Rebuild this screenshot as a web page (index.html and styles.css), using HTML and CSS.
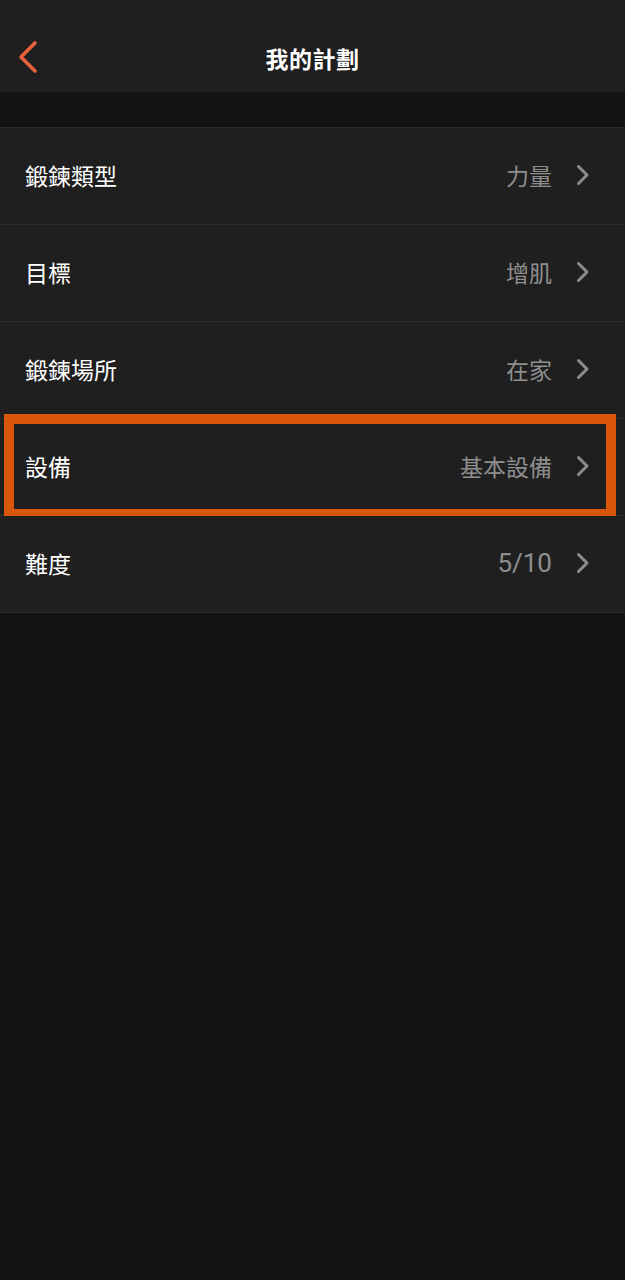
FILE: index.html
```html
<!DOCTYPE html>
<html lang="zh-Hant">
  <head>
    <meta charset="UTF-8" />
    <meta name="viewport" content="width=device-width, initial-scale=1.0" />
    <title>我的計劃</title>
    <link rel="stylesheet" href="styles.css">
  </head>
  <body>
    <header class="topbar">
      <button class="back" aria-label="返回">
        <svg width="22" height="34" viewBox="0 0 22 34">
          <path d="M18 3 L4 17 L18 31" fill="none" stroke="#e8603c" stroke-width="3.6" stroke-linecap="round" stroke-linejoin="round" />
        </svg>
      </button>
      <h1 class="title">我的計劃</h1>
    </header>

    <div class="spacer"></div>

    <ul class="settings">
      <li class="row">
        <span class="label">鍛鍊類型</span>
        <span class="value">力量</span>
        <svg class="chev" width="14" height="22" viewBox="0 0 14 22">
          <path d="M2.5 2.5 L11 11 L2.5 19.5" fill="none" stroke="#8c8c8c" stroke-width="3" stroke-linecap="round" stroke-linejoin="round" />
        </svg>
      </li>
      <li class="row">
        <span class="label">目標</span>
        <span class="value">增肌</span>
        <svg class="chev" width="14" height="22" viewBox="0 0 14 22">
          <path d="M2.5 2.5 L11 11 L2.5 19.5" fill="none" stroke="#8c8c8c" stroke-width="3" stroke-linecap="round" stroke-linejoin="round" />
        </svg>
      </li>
      <li class="row">
        <span class="label">鍛鍊場所</span>
        <span class="value">在家</span>
        <svg class="chev" width="14" height="22" viewBox="0 0 14 22">
          <path d="M2.5 2.5 L11 11 L2.5 19.5" fill="none" stroke="#8c8c8c" stroke-width="3" stroke-linecap="round" stroke-linejoin="round" />
        </svg>
      </li>
      <li class="row">
        <span class="label">設備</span>
        <span class="value">基本設備</span>
        <svg class="chev" width="14" height="22" viewBox="0 0 14 22">
          <path d="M2.5 2.5 L11 11 L2.5 19.5" fill="none" stroke="#8c8c8c" stroke-width="3" stroke-linecap="round" stroke-linejoin="round" />
        </svg>
        <span class="highlight"></span>
      </li>
      <li class="row">
        <span class="label">難度</span>
        <span class="value num">5/10</span>
        <svg class="chev" width="14" height="22" viewBox="0 0 14 22">
          <path d="M2.5 2.5 L11 11 L2.5 19.5" fill="none" stroke="#8c8c8c" stroke-width="3" stroke-linecap="round" stroke-linejoin="round" />
        </svg>
      </li>
    </ul>
  </body>
</html>
```

FILE: styles.css
```css
body {
  margin: 0;
  background-color: #131313;
  font-family: "Noto Sans CJK TC", "Noto Sans", sans-serif;
  color: #ffffff;
}
.topbar {
  height: 92px;
  background: #1f1f1f;
  display: flex;
  align-items: center;
  justify-content: center;
  position: relative;
}
.back {
  position: absolute;
  left: 17px;
  top: 40px;
  padding: 0;
  border: none;
  background: none;
  display: flex;
}
.title {
  margin: 0;
  font-size: 23px;
  font-weight: bold;
  letter-spacing: 0.5px;
  padding-top: 23px;
}
.spacer {
  height: 35px;
}
.settings {
  list-style: none;
  margin: 0;
  padding: 0;
  border-top: 1px solid #2a2a2a;
}
.row {
  position: relative;
  height: 96px;
  display: flex;
  align-items: center;
  padding: 0 35px 3px 25px;
  box-sizing: border-box;
  height: 97px;
  background: #1f1f1f;
  border-bottom: 1px solid #2e2e2e;
}
.label {
  flex: 1;
  font-size: 23px;
}
.value {
  color: #8e8e8e;
  font-size: 23px;
  margin-right: 24px;
}
.value.num {
  font-family: "Roboto", "Noto Sans", sans-serif;
  font-size: 26px;
}
.chev {
  display: block;
}
.highlight {
  position: absolute;
  left: 4px;
  right: 9px;
  top: -5px;
  bottom: -4px;
  border: 10px solid #d9560b;
  pointer-events: none;
}
```
